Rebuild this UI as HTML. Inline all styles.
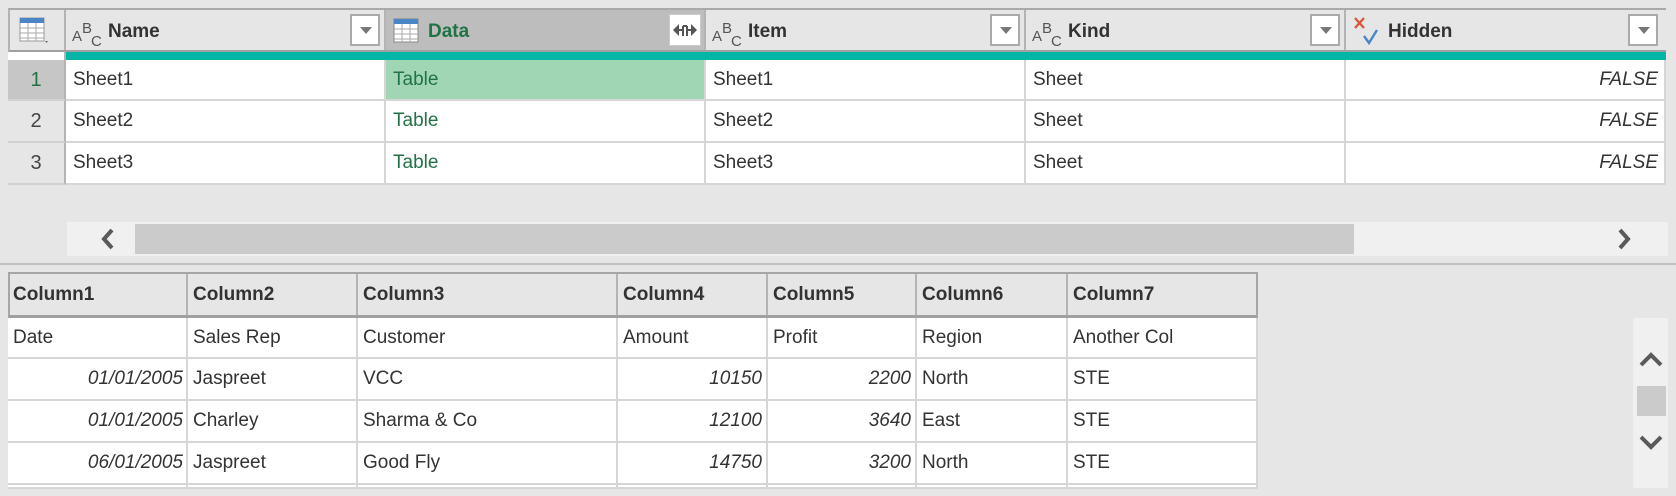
<!DOCTYPE html>
<html><head><meta charset="utf-8"><style>
*{box-sizing:border-box;margin:0;padding:0}
body{width:1676px;height:496px;background:#e6e6e6;position:relative;overflow:hidden;font-family:"Liberation Sans",sans-serif;color:#333;font-size:19px}
.a{position:absolute}
.c{position:absolute;background:#fff;border-right:2px solid #d6d6d6;border-bottom:2px solid #d6d6d6;line-height:40px;padding-left:7px;white-space:nowrap;overflow:hidden}
.h{position:absolute;background:#e6e6e6;border-right:2px solid #b4b4b4;font-weight:bold;white-space:nowrap}
.dd{position:absolute;width:30px;height:32px;top:6px;background:#fff;border:2px solid #a9a9a9}
.dd:after{content:"";position:absolute;left:8px;top:11px;border-left:6px solid transparent;border-right:6px solid transparent;border-top:7px solid #777}
.abc{position:absolute;top:12px;left:6px;font-size:15px;font-weight:normal;color:#555;width:32px;height:30px}
.abc span{position:absolute}
.r{text-align:right;padding-right:6px;font-style:italic}
.g{color:#217346}
.n{position:absolute;left:8px;width:58px;background:#e6e6e6;border-right:2px solid #b4b4b4;border-bottom:2px solid #d0d0d0;text-align:center;line-height:40px;color:#444;font-size:20px}
.t{top:11px}
</style></head><body>

<div class="a" style="left:8px;top:8px;width:1658px;height:44px;border-top:2px solid #a9a9a9;border-left:2px solid #b4b4b4;border-bottom:2px solid #a0a0a0;background:#e6e6e6"></div>
<div class="h" style="left:10px;top:10px;width:56px;height:40px">
<svg class="a" style="left:9px;top:7px" width="32" height="30" viewBox="0 0 32 30"><rect x="1" y="1" width="24" height="23" fill="#fff" stroke="#999"/><rect x="1" y="1" width="24" height="5" fill="#4a86c5"/><path d="M1 11H25M1 16H25M1 21H25M9 6V24M17 6V24" stroke="#aaa"/><path d="M26 24l3 0-1.5 2z" fill="#666"/></svg></div>
<div class="h" style="left:66px;top:10px;width:320px;height:40px"><div class="abc"><span style="left:0;top:6px">A</span><span style="left:10px;top:-2px">B</span><span style="left:19px;top:11px">C</span></div><div class="a t" style="left:42px;color:#333">Name</div><div class="dd" style="left:284px;top:4px"></div></div>
<div class="h" style="left:386px;top:10px;width:320px;height:40px;background:#bdbdbd"><svg class="a" style="left:7px;top:8px" width="26" height="26" viewBox="0 0 26 26"><rect x="1" y="1" width="24" height="23" fill="#fff" stroke="#888"/><rect x="1" y="1" width="24" height="5" fill="#4a86c5"/><path d="M1 11H25M1 16H25M1 21H25M9 6V24M17 6V24" stroke="#aaa"/></svg><div class="a g t" style="left:42px">Data</div>
<div class="a" style="left:283px;top:4px;width:32px;height:32px;background:#fff;border:1px solid #ccc"><svg width="30" height="30" viewBox="0 0 30 30"><path d="M3 15l6-6v12z M27 15l-6-6v12z" fill="#555"/><path d="M13 11v10M17 11v10M9 15h4M17 15h4M13 11h4" stroke="#555" stroke-width="2" fill="none"/></svg></div></div>
<div class="h" style="left:706px;top:10px;width:320px;height:40px"><div class="abc"><span style="left:0;top:6px">A</span><span style="left:10px;top:-2px">B</span><span style="left:19px;top:11px">C</span></div><div class="a t" style="left:42px">Item</div><div class="dd" style="left:284px;top:4px"></div></div>
<div class="h" style="left:1026px;top:10px;width:320px;height:40px"><div class="abc"><span style="left:0;top:6px">A</span><span style="left:10px;top:-2px">B</span><span style="left:19px;top:11px">C</span></div><div class="a t" style="left:42px">Kind</div><div class="dd" style="left:284px;top:4px"></div></div>
<div class="h" style="left:1346px;top:10px;width:320px;height:40px;border-right:none"><svg class="a" style="left:6px;top:4px" width="30" height="34" viewBox="0 0 30 34"><path d="M3 4l9 10M12 4l-9 10" stroke="#d9583b" stroke-width="2.4"/><path d="M12 22l5 7 8-13" stroke="#4a86c5" stroke-width="2.4" fill="none"/></svg><div class="a t" style="left:42px">Hidden</div><div class="dd" style="left:282px;top:4px"></div></div>

<div class="a" style="left:8px;top:52px;width:58px;height:8px;background:#fff;border-right:2px solid #b4b4b4"></div>
<div class="a" style="left:66px;top:52px;width:1600px;height:8px;background:#05b5a5"></div>

<div class="n" style="top:60px;height:41px;background:#c6c6c6" ><span class="g">1</span></div>
<div class="n" style="top:101px;height:42px">2</div>
<div class="n" style="top:143px;height:42px">3</div>

<div class="c" style="left:66px;top:60px;width:320px;height:41px">Sheet1</div>
<div class="c g" style="left:386px;top:60px;width:320px;height:41px;background:#a0d6b4">Table</div>
<div class="c" style="left:706px;top:60px;width:320px;height:41px">Sheet1</div>
<div class="c" style="left:1026px;top:60px;width:320px;height:41px">Sheet</div>
<div class="c r" style="left:1346px;top:60px;width:320px;height:41px">FALSE</div>

<div class="c" style="left:66px;top:101px;width:320px;height:42px">Sheet2</div>
<div class="c g" style="left:386px;top:101px;width:320px;height:42px">Table</div>
<div class="c" style="left:706px;top:101px;width:320px;height:42px">Sheet2</div>
<div class="c" style="left:1026px;top:101px;width:320px;height:42px">Sheet</div>
<div class="c r" style="left:1346px;top:101px;width:320px;height:42px">FALSE</div>

<div class="c" style="left:66px;top:143px;width:320px;height:42px">Sheet3</div>
<div class="c g" style="left:386px;top:143px;width:320px;height:42px">Table</div>
<div class="c" style="left:706px;top:143px;width:320px;height:42px">Sheet3</div>
<div class="c" style="left:1026px;top:143px;width:320px;height:42px">Sheet</div>
<div class="c r" style="left:1346px;top:143px;width:320px;height:42px">FALSE</div>

<div class="a" style="left:67px;top:222px;width:1601px;height:34px;background:#f0f0f0"></div>
<div class="a" style="left:135px;top:224px;width:1219px;height:30px;background:#cbcbcb"></div>
<svg class="a" style="left:98px;top:227px" width="20" height="24" viewBox="0 0 20 24"><path d="M14 3L6 12l8 9" stroke="#5a5a5a" stroke-width="4" fill="none"/></svg>
<svg class="a" style="left:1614px;top:227px" width="20" height="24" viewBox="0 0 20 24"><path d="M6 3l8 9-8 9" stroke="#5a5a5a" stroke-width="4" fill="none"/></svg>

<div class="a" style="left:0;top:263px;width:1676px;height:2px;background:#c0c0c0"></div>

<div class="a" style="left:8px;top:272px;width:1250px;height:46px;border:2px solid #a6a6a6;border-bottom:3px solid #a0a0a0;background:#e6e6e6"></div>
<div class="h" style="left:10px;top:274px;width:178px;height:41px;line-height:41px;padding-left:3px">Column1</div>
<div class="h" style="left:188px;top:274px;width:170px;height:41px;line-height:41px;padding-left:5px">Column2</div>
<div class="h" style="left:358px;top:274px;width:260px;height:41px;line-height:41px;padding-left:5px">Column3</div>
<div class="h" style="left:618px;top:274px;width:150px;height:41px;line-height:41px;padding-left:5px">Column4</div>
<div class="h" style="left:768px;top:274px;width:149px;height:41px;line-height:41px;padding-left:5px">Column5</div>
<div class="h" style="left:917px;top:274px;width:151px;height:41px;line-height:41px;padding-left:5px">Column6</div>
<div class="h" style="left:1068px;top:274px;width:188px;height:41px;line-height:41px;padding-left:5px;border-right:none">Column7</div>

<div class="a" style="left:8px;top:318px;width:1250px;height:170px;background:#fff;border-left:1px solid #d0d0d0"></div>
<div class="c" style="left:8px;top:318px;width:180px;height:41px;padding-left:5px">Date</div>
<div class="c" style="left:188px;top:318px;width:170px;height:41px;padding-left:5px">Sales Rep</div>
<div class="c" style="left:358px;top:318px;width:260px;height:41px;padding-left:5px">Customer</div>
<div class="c" style="left:618px;top:318px;width:150px;height:41px;padding-left:5px">Amount</div>
<div class="c" style="left:768px;top:318px;width:149px;height:41px;padding-left:5px">Profit</div>
<div class="c" style="left:917px;top:318px;width:151px;height:41px;padding-left:5px">Region</div>
<div class="c" style="left:1068px;top:318px;width:190px;height:41px;padding-left:5px">Another Col</div>
<div class="c r" style="left:8px;top:359px;width:180px;height:42px;padding-right:3px">01/01/2005</div>
<div class="c" style="left:188px;top:359px;width:170px;height:42px;padding-left:5px">Jaspreet</div>
<div class="c" style="left:358px;top:359px;width:260px;height:42px;padding-left:5px">VCC</div>
<div class="c r" style="left:618px;top:359px;width:150px;height:42px;padding-right:4px">10150</div>
<div class="c r" style="left:768px;top:359px;width:149px;height:42px;padding-right:4px">2200</div>
<div class="c" style="left:917px;top:359px;width:151px;height:42px;padding-left:5px">North</div>
<div class="c" style="left:1068px;top:359px;width:190px;height:42px;padding-left:5px">STE</div>
<div class="c r" style="left:8px;top:401px;width:180px;height:42px;padding-right:3px">01/01/2005</div>
<div class="c" style="left:188px;top:401px;width:170px;height:42px;padding-left:5px">Charley</div>
<div class="c" style="left:358px;top:401px;width:260px;height:42px;padding-left:5px">Sharma &amp; Co</div>
<div class="c r" style="left:618px;top:401px;width:150px;height:42px;padding-right:4px">12100</div>
<div class="c r" style="left:768px;top:401px;width:149px;height:42px;padding-right:4px">3640</div>
<div class="c" style="left:917px;top:401px;width:151px;height:42px;padding-left:5px">East</div>
<div class="c" style="left:1068px;top:401px;width:190px;height:42px;padding-left:5px">STE</div>
<div class="c r" style="left:8px;top:443px;width:180px;height:42px;padding-right:3px">06/01/2005</div>
<div class="c" style="left:188px;top:443px;width:170px;height:42px;padding-left:5px">Jaspreet</div>
<div class="c" style="left:358px;top:443px;width:260px;height:42px;padding-left:5px">Good Fly</div>
<div class="c r" style="left:618px;top:443px;width:150px;height:42px;padding-right:4px">14750</div>
<div class="c r" style="left:768px;top:443px;width:149px;height:42px;padding-right:4px">3200</div>
<div class="c" style="left:917px;top:443px;width:151px;height:42px;padding-left:5px">North</div>
<div class="c" style="left:1068px;top:443px;width:190px;height:42px;padding-left:5px">STE</div>
<div class="c" style="left:8px;top:485px;width:180px;height:4px"></div>
<div class="c" style="left:188px;top:485px;width:170px;height:4px"></div>
<div class="c" style="left:358px;top:485px;width:260px;height:4px"></div>
<div class="c" style="left:618px;top:485px;width:150px;height:4px"></div>
<div class="c" style="left:768px;top:485px;width:149px;height:4px"></div>
<div class="c" style="left:917px;top:485px;width:151px;height:4px"></div>
<div class="c" style="left:1068px;top:485px;width:190px;height:4px"></div>

<div class="a" style="left:1633px;top:318px;width:35px;height:170px;background:#f0f0f0"></div>
<div class="a" style="left:1637px;top:386px;width:29px;height:30px;background:#cbcbcb"></div>
<svg class="a" style="left:1638px;top:350px" width="26" height="20" viewBox="0 0 26 20"><path d="M3 15l10-10 10 10" stroke="#5a5a5a" stroke-width="4" fill="none"/></svg>
<svg class="a" style="left:1638px;top:432px" width="26" height="20" viewBox="0 0 26 20"><path d="M3 5l10 10 10-10" stroke="#5a5a5a" stroke-width="4" fill="none"/></svg>
</body></html>
